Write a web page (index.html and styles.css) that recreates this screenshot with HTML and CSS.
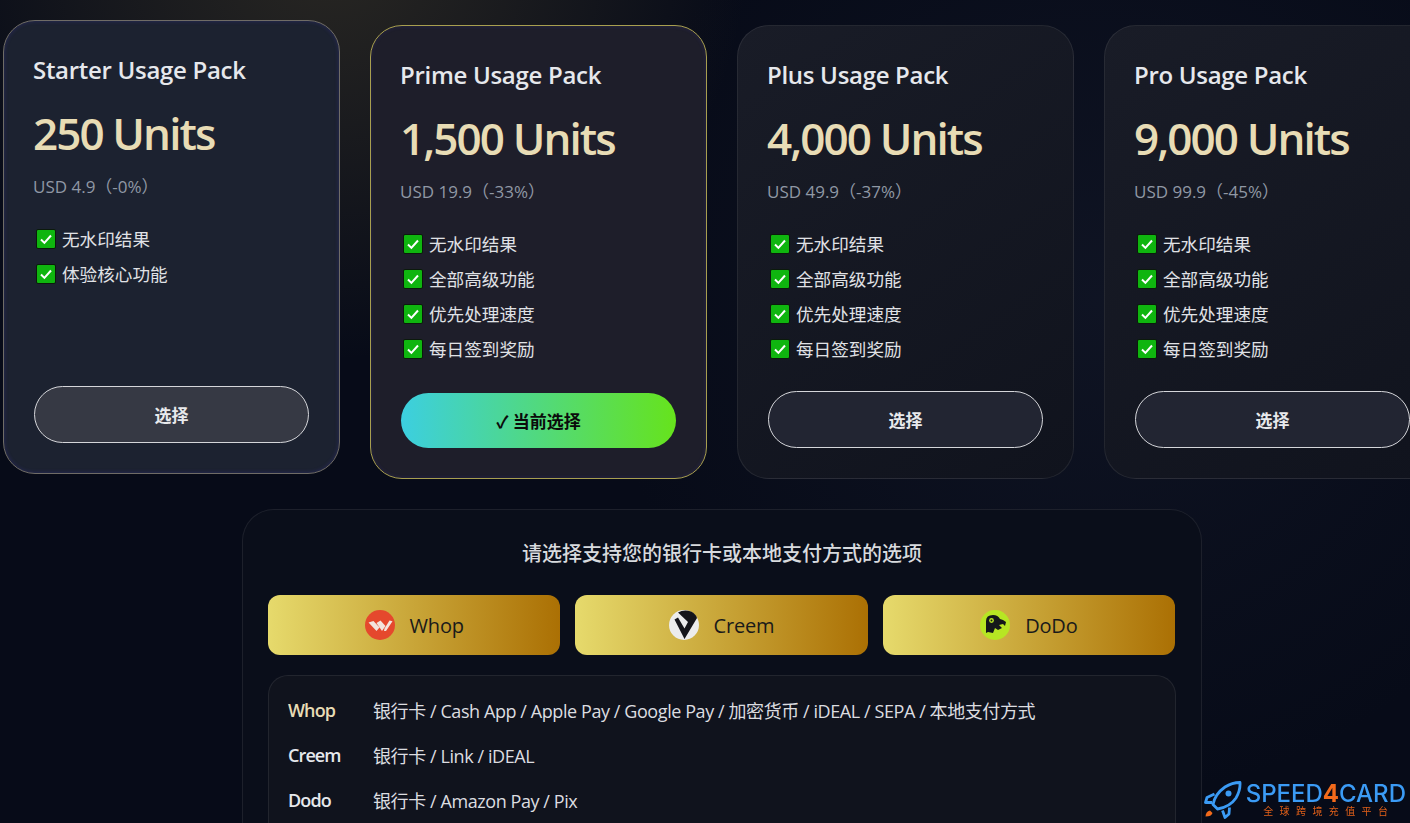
FILE: index.html
```html
<!DOCTYPE html>
<html lang="en">
<head>
    <meta charset="UTF-8">
    <meta name="viewport" content="width=device-width, initial-scale=1.0">
    <title>Usage Packs</title>
    <link rel="stylesheet" href="styles.css">
</head>
<body>
    <svg class="defs" width="0" height="0">
        <symbol id="tick" viewBox="0 0 20 20">
            <rect x="0.5" y="0.5" width="19" height="19" rx="1.5" fill="#0fb50f" stroke="#0b1a0b"/>
            <path d="M5 10.5l3.4 3.4L15 6.5" fill="none" stroke="#fff" stroke-width="2"/>
        </symbol>
    </svg>

    <div class="plans">
        <div class="card card-starter">
            <h3 class="name">Starter Usage Pack</h3>
            <div class="units">250 Units</div>
            <div class="price">USD 4.9（-0%）</div>
            <ul class="features">
                <li><svg class="tick"><use href="#tick"/></svg>无水印结果</li>
                <li><svg class="tick"><use href="#tick"/></svg>体验核心功能</li>
            </ul>
            <button class="pick pick-hover">选择</button>
        </div>
        <div class="card card-prime">
            <h3 class="name">Prime Usage Pack</h3>
            <div class="units">1,500 Units</div>
            <div class="price">USD 19.9（-33%）</div>
            <ul class="features">
                <li><svg class="tick"><use href="#tick"/></svg>无水印结果</li>
                <li><svg class="tick"><use href="#tick"/></svg>全部高级功能</li>
                <li><svg class="tick"><use href="#tick"/></svg>优先处理速度</li>
                <li><svg class="tick"><use href="#tick"/></svg>每日签到奖励</li>
            </ul>
            <button class="pick pick-current">✓ 当前选择</button>
        </div>
        <div class="card">
            <h3 class="name">Plus Usage Pack</h3>
            <div class="units">4,000 Units</div>
            <div class="price">USD 49.9（-37%）</div>
            <ul class="features">
                <li><svg class="tick"><use href="#tick"/></svg>无水印结果</li>
                <li><svg class="tick"><use href="#tick"/></svg>全部高级功能</li>
                <li><svg class="tick"><use href="#tick"/></svg>优先处理速度</li>
                <li><svg class="tick"><use href="#tick"/></svg>每日签到奖励</li>
            </ul>
            <button class="pick">选择</button>
        </div>
        <div class="card">
            <h3 class="name">Pro Usage Pack</h3>
            <div class="units">9,000 Units</div>
            <div class="price">USD 99.9（-45%）</div>
            <ul class="features">
                <li><svg class="tick"><use href="#tick"/></svg>无水印结果</li>
                <li><svg class="tick"><use href="#tick"/></svg>全部高级功能</li>
                <li><svg class="tick"><use href="#tick"/></svg>优先处理速度</li>
                <li><svg class="tick"><use href="#tick"/></svg>每日签到奖励</li>
            </ul>
            <button class="pick">选择</button>
        </div>
    </div>

    <div class="payment">
        <h4 class="payment-title">请选择支持您的银行卡或本地支付方式的选项</h4>
        <div class="providers">
            <button class="provider">
                <svg class="provider-logo" viewBox="0 0 30 30">
                    <circle cx="15" cy="15" r="15" fill="#e5482d"/>
                    <path d="M3.5 12.5L8.5 11l6 6.5-3 3.5zM11.5 13L15.5 10.5l5 5.5-3.5 5zM19.5 18.5L24.5 10.5l3 .8-6.5 9.7-2 0z" fill="#f3e4dd"/>
                </svg>
                Whop
            </button>
            <button class="provider">
                <svg class="provider-logo" viewBox="0 0 30 30">
                    <circle cx="15" cy="15" r="15" fill="#ececec"/>
                    <path d="M9 2.5Q15-1 22 1.5Q27 4 28 8L15.5 29 5.5 9.5 9 7.5l6.5 11L19 12z" fill="#15151a"/>
                </svg>
                Creem
            </button>
            <button class="provider">
                <svg class="provider-logo" viewBox="0 0 30 30">
                    <circle cx="15" cy="15" r="15" fill="#b7e623"/>
                    <path d="M6 23V11Q6 5 13 5q5 0 7 4 3 .5 6 3l-1 4-2-2-4 1 3 3-4 2-3-2-2 5-5-1z" fill="#14181a"/>
                    <circle cx="11.5" cy="10.5" r="2.4" fill="#b7e623"/>
                    <circle cx="11.5" cy="10.5" r="1" fill="#14181a"/>
                </svg>
                DoDo
            </button>
        </div>
        <div class="methods">
            <div class="method"><span class="method-name method-name-on">Whop</span><span>银行卡 / Cash App / Apple Pay / Google Pay / 加密货币 / iDEAL / SEPA / 本地支付方式</span></div>
            <div class="method"><span class="method-name">Creem</span><span>银行卡 / Link / iDEAL</span></div>
            <div class="method"><span class="method-name">Dodo</span><span>银行卡 / Amazon Pay / Pix</span></div>
        </div>
    </div>

    <div class="brand">
        <svg class="brand-rocket" viewBox="0 0 38 38">
            <path d="M1.5 35.5q.2-5 4.5-6l2.500 2.500q-1 3.500-7 3.500z" fill="#f26a1b"/>
            <path d="M13.500 28L9 23.500Q11 13 21 6Q28 1.500 36 1.500q.5 8-4 15.500-6 9-18.500 11zM10.500 13L3 16.500 1.500 21.500 8 21.500M25.500 26.500L25 33l-4 3.500-2.500-7" fill="none" stroke="#3b9bf5" stroke-width="2.800" stroke-linejoin="round"/>
            <circle cx="24.500" cy="12.500" r="3" fill="#3b9bf5"/>
        </svg>
        <div class="brand-text">
            <div class="brand-name">SPEED<b>4</b>CARD</div>
            <div class="brand-sub">全球跨境充值平台</div>
        </div>
    </div>
</body>
</html>
```

FILE: styles.css
```css
* {
    box-sizing: border-box;
}

html, body {
    height: 823px;
    overflow: hidden;
}

body {
    margin: 0;
    font-family: "Open Sans", "Noto Sans CJK SC", sans-serif;
    color: #e6e8ec;
    background:
        radial-gradient(circle at 330px -60px, rgba(120, 105, 60, 0.3), transparent 420px),
        radial-gradient(circle at 1100px 300px, rgba(30, 36, 56, 0.35), transparent 500px),
        #070b18;
}

.defs {
    display: block;
}

.plans {
    display: flex;
    align-items: flex-start;
    gap: 30px;
    padding-left: 3px;
    padding-top: 25px;
    width: 1600px;
}

.card {
    flex: 0 0 337px;
    height: 454px;
    display: flex;
    flex-direction: column;
    padding: 30px;
    border: 1px solid rgba(255, 255, 255, 0.08);
    border-radius: 32px;
    background: linear-gradient(145deg, #191c27, #10131d);
}

.card-starter {
    margin-top: -5px;
    border-color: #6f6c66;
    background: #1c2230;
    box-shadow: inset 0 0 4px rgba(70, 60, 200, 0.3);
}

.card-prime {
    border-color: #a89f4f;
    background: #1e1e2a;
    box-shadow: inset 0 0 4px rgba(70, 60, 200, 0.2);
}

.name {
    margin: 0 0 0 -1px;
    font-size: 24px;
    line-height: 38px;
    font-weight: 600;
    letter-spacing: -0.3px;
}

.units {
    margin: 15px 0 0 -1px;
    font-size: 44px;
    line-height: 58px;
    font-weight: 600;
    letter-spacing: -1.9px;
    color: #e8dcb5;
}

.price {
    margin: 13px 0 0 -1px;
    font-size: 17px;
    line-height: 24px;
    color: #9098a5;
}

.features {
    margin: 22px 0 0;
    padding: 0;
    list-style: none;
}

.features li {
    display: flex;
    align-items: center;
    height: 35px;
    font-size: 17.6px;
    color: #e0e2e6;
}

.tick {
    width: 20px;
    height: 20px;
    margin-left: 2px;
    margin-right: 6px;
}

.pick {
    margin-top: auto;
    width: 275px;
    height: 57px;
    font: 700 17px "Open Sans", "Noto Sans CJK SC", sans-serif;
    color: #e8e9ec;
    border: 1px solid #d5d6da;
    border-radius: 30px;
    background: #222532;
}

.pick-hover {
    background: #363944;
}

.pick-current {
    height: 55px;
    border: none;
    color: #0b0b0b;
    background: linear-gradient(90deg, #3ccfe0, #66e31c);
}

.payment {
    width: 960px;
    height: 400px;
    margin: 30px 0 0 242px;
    padding: 25px;
    border: 1px solid rgba(255, 255, 255, 0.08);
    border-radius: 32px;
    background: #0a0e1a;
}

.payment-title {
    margin: 0;
    text-align: center;
    font-size: 20px;
    line-height: 38px;
    font-weight: 500;
    color: #d8dade;
}

.providers {
    display: flex;
    gap: 15px;
    margin-top: 22px;
    margin-right: 1px;
}

.provider {
    flex: 1;
    height: 60px;
    display: flex;
    align-items: center;
    justify-content: center;
    gap: 15px;
    border: none;
    border-radius: 12px;
    font: 400 20px "Open Sans", sans-serif;
    letter-spacing: -0.2px;
    color: #1a1a1a;
    background: linear-gradient(90deg, #e6da6c, #ab7004);
}

.provider-logo {
    width: 30px;
    height: 30px;
}

.methods {
    margin-top: 20px;
    height: 200px;
    padding: 11px 20px 11px 19px;
    border: 1px solid rgba(255, 255, 255, 0.08);
    border-radius: 20px;
    background: #10131d;
}

.method {
    display: flex;
    align-items: center;
    height: 45px;
    font-size: 18px;
    letter-spacing: -0.42px;
    color: #dcdde0;
}

.method-name {
    width: 85px;
    font-weight: 600;
    letter-spacing: -0.9px;
    color: #e6e8ec;
}

.method-name-on {
    color: #e8dcb5;
}

/* floating watermark in the corner */
.brand {
    position: fixed;
    right: 4px;
    bottom: 4px;
    display: flex;
    align-items: center;
    gap: 4px;
    background: rgba(7, 11, 24, 0.7);
}

.brand-rocket {
    width: 38px;
    height: 38px;
}

.brand-name {
    font: 500 24px/23px "Inter", sans-serif;
    color: #3b9bf5;
}

.brand-name b {
    font-weight: 700;
    color: #f26a1b;
}

.brand-sub {
    padding-left: 6px;
    text-align: center;
    font-size: 10px;
    line-height: 13px;
    letter-spacing: 6.4px;
    color: #e0601a;
}
```
